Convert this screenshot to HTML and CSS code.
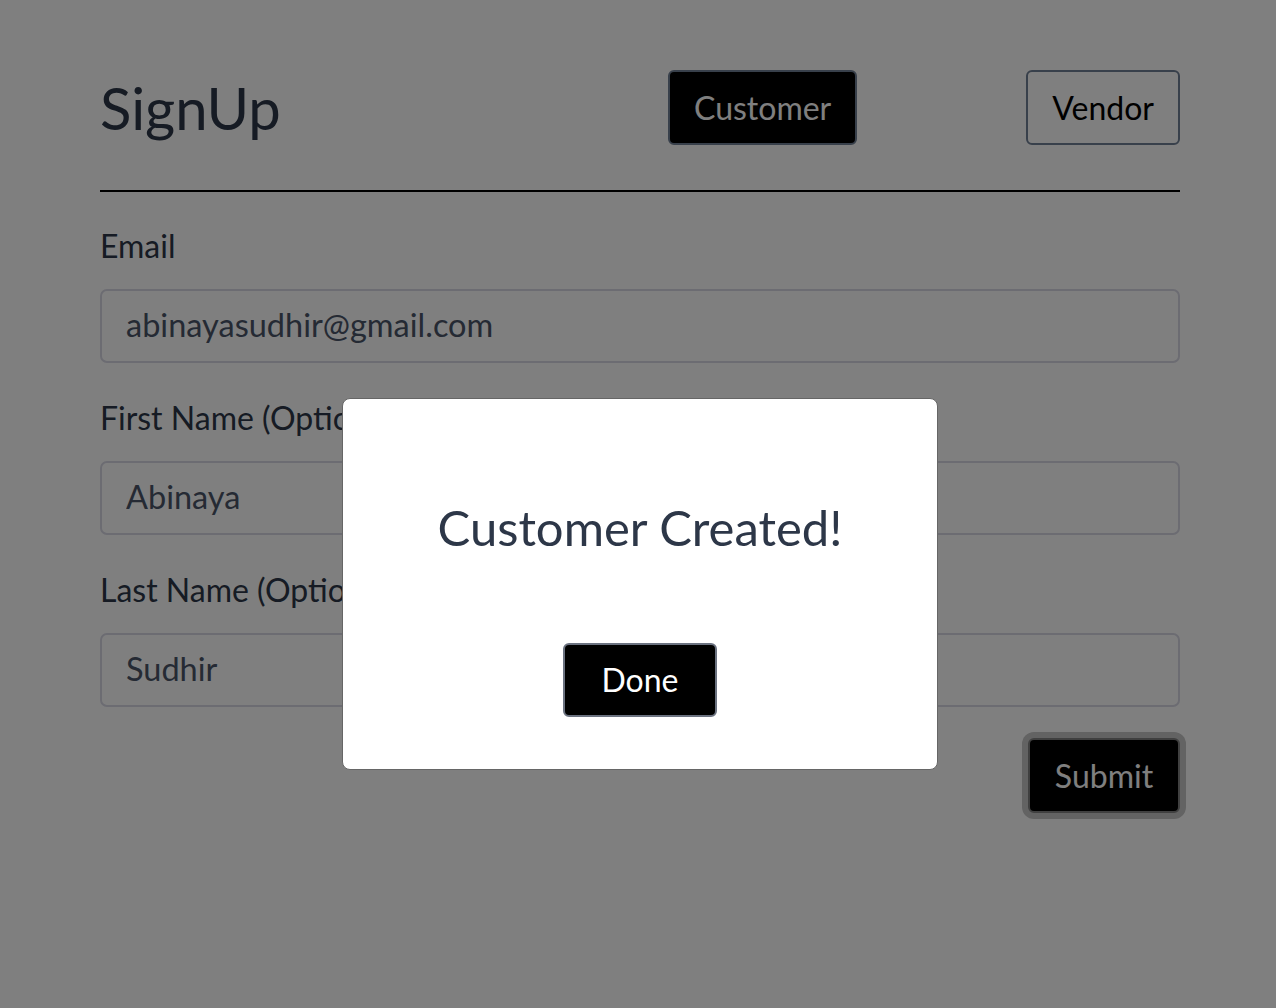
FILE: index.html
```html
<!DOCTYPE html>
<html lang="en">
<head>
<meta charset="utf-8">
<title>SignUp</title>
<link rel="stylesheet" href="styles.css">
</head>
<body>
<main class="page">
  <header class="head">
    <h1 class="title">SignUp</h1>
    <div class="tabs">
      <button class="btn btn-dark">Customer</button>
      <button class="btn btn-outline">Vendor</button>
    </div>
  </header>
  <hr class="rule">
  <form class="form">
    <div class="field">
      <label class="label">Email</label>
      <input class="input" type="text" value="abinayasudhir@gmail.com">
    </div>
    <div class="field">
      <label class="label">First Name (Optional)</label>
      <input class="input" type="text" value="Abinaya">
    </div>
    <div class="field">
      <label class="label">Last Name (Optional)</label>
      <input class="input" type="text" value="Sudhir">
    </div>
    <div class="actions">
      <button type="button" class="btn btn-dark btn-focus">Submit</button>
    </div>
  </form>
</main>
<div class="overlay"></div>
<div class="modal">
  <h2 class="modal-title">Customer Created!</h2>
  <button class="btn btn-done">Done</button>
</div>
</body>
</html>
```
FILE: styles.css
```css
* { box-sizing: border-box; }
html, body { margin: 0; padding: 0; }
body {
  background: #ffffff;
  font-family: "Trebuchet MS", Lato, "Open Sans", sans-serif;
  color: #2d3748;
  width: 1276px;
  height: 1008px;
  overflow: hidden;
}
.page {
  width: 1080px;
  margin: 0 0 0 100px;
  padding-top: 70px;
}
.head {
  display: flex;
  align-items: center;
  height: 75px;
}
.title {
  flex: 1;
  margin: 0;
  font-size: 58px;
  font-weight: 400;
  line-height: 75px;
  color: #2d3748;
}
.tabs {
  display: flex;
  gap: 169px;
}
.btn {
  font-family: inherit;
  font-size: 32px;
  height: 75px;
  padding: 0 24px;
  border-radius: 6px;
  border: 2px solid #718096;
  cursor: pointer;
  line-height: 1;
}
.btn-dark {
  background: #000000;
  color: #ffffff;
}
.btn-outline {
  background: transparent;
  color: #000000;
}
.rule {
  margin: 45px 0 0;
  border: 0;
  height: 2px;
  background: #000000;
}
.form {
  padding-top: 30px;
}
.field {
  display: flex;
  flex-direction: column;
  margin-bottom: 31px;
}
.label {
  font-size: 32px;
  line-height: 48px;
  color: #2d3748;
  margin-bottom: 19px;
}
.input {
  height: 74px;
  width: 100%;
  font-family: inherit;
  font-size: 32.5px;
  color: #4a5568;
  padding: 0 24px 3px;
  border: 2px solid #d8d8e4;
  border-radius: 7px;
  background: #ffffff;
}
.actions {
  display: flex;
  justify-content: flex-end;
  margin-top: 2px;
}
.btn-focus {
  width: 152px;
  border-color: #808080;
  box-shadow: 0 0 0 6px #c6c6c6;
}
.overlay {
  position: fixed;
  inset: 0;
  background: rgba(0, 0, 0, 0.5);
}
.modal {
  position: fixed;
  top: 398px;
  left: 342px;
  width: 596px;
  height: 372px;
  background: #ffffff;
  border: 1px solid #666666;
  border-radius: 8px;
  display: flex;
  flex-direction: column;
  align-items: center;
  padding-top: 92px;
}
.modal-title {
  margin: 0;
  font-size: 49px;
  font-weight: 400;
  line-height: 72px;
  color: #2d3748;
}
.btn-done {
  margin-top: 80px;
  width: 154px;
  height: 74px;
  background: #000000;
  color: #ffffff;
  border-color: #6b7280;
}
```
